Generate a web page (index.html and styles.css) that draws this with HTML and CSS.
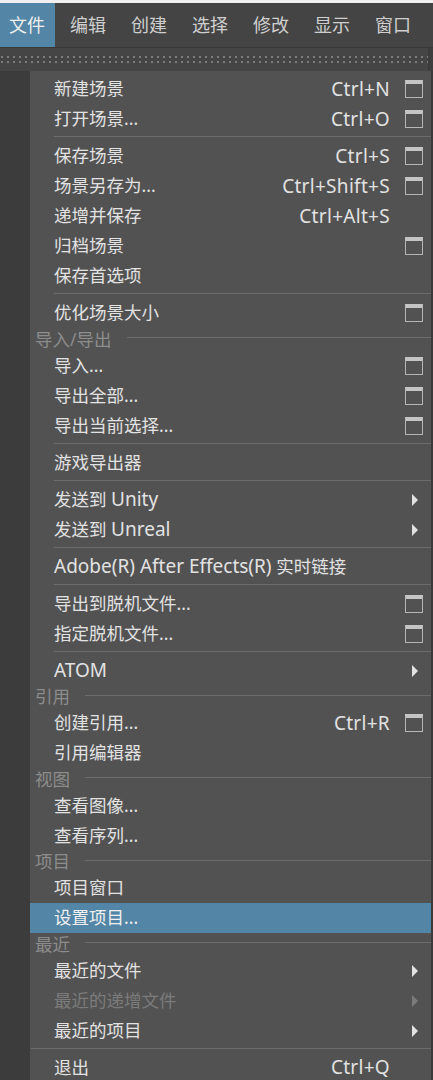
FILE: index.html
```html
<!DOCTYPE html>
<html lang="zh-CN">
<head>
<meta charset="utf-8">
<title>Maya 文件菜单</title>
<link rel="stylesheet" href="styles.css">
</head>
<body>
<div class="app">
  <div class="topstrip"></div>
  <div class="topbar">
    <span class="tab active">文件</span>
    <span class="tab">编辑</span>
    <span class="tab">创建</span>
    <span class="tab">选择</span>
    <span class="tab">修改</span>
    <span class="tab">显示</span>
    <span class="tab">窗口</span>
  </div>
  <div class="toolbar">
    <div class="grip"><div class="dots"></div><div class="dots"></div></div>
    <div class="tool-edge"></div>
  </div>
  <div class="main">
    <div class="side"></div>
    <div class="menu">
      <div class="item"><span class="label">新建场景</span><span class="key">Ctrl+N</span><span class="opt"><i class="box"></i></span></div>
      <div class="item"><span class="label">打开场景...</span><span class="key">Ctrl+O</span><span class="opt"><i class="box"></i></span></div>
      <div class="sep"></div>
      <div class="item"><span class="label">保存场景</span><span class="key">Ctrl+S</span><span class="opt"><i class="box"></i></span></div>
      <div class="item"><span class="label">场景另存为...</span><span class="key">Ctrl+Shift+S</span><span class="opt"><i class="box"></i></span></div>
      <div class="item"><span class="label">递增并保存</span><span class="key">Ctrl+Alt+S</span><span class="opt"></span></div>
      <div class="item"><span class="label">归档场景</span><span class="opt"><i class="box"></i></span></div>
      <div class="item"><span class="label">保存首选项</span><span class="opt"></span></div>
      <div class="sep"></div>
      <div class="item"><span class="label">优化场景大小</span><span class="opt"><i class="box"></i></span></div>
      <div class="header"><span>导入/导出</span><i class="hline"></i></div>
      <div class="item"><span class="label">导入...</span><span class="opt"><i class="box"></i></span></div>
      <div class="item"><span class="label">导出全部...</span><span class="opt"><i class="box"></i></span></div>
      <div class="item"><span class="label">导出当前选择...</span><span class="opt"><i class="box"></i></span></div>
      <div class="sep"></div>
      <div class="item"><span class="label">游戏导出器</span><span class="opt"></span></div>
      <div class="sep"></div>
      <div class="item"><span class="label">发送到 <span class="lat">Unity</span></span><span class="opt"><i class="arrow"></i></span></div>
      <div class="item"><span class="label">发送到 <span class="lat">Unreal</span></span><span class="opt"><i class="arrow"></i></span></div>
      <div class="sep"></div>
      <div class="item"><span class="label"><span class="lat">Adobe(R) After Effects(R)</span> 实时链接</span><span class="opt"></span></div>
      <div class="sep"></div>
      <div class="item"><span class="label">导出到脱机文件...</span><span class="opt"><i class="box"></i></span></div>
      <div class="item"><span class="label">指定脱机文件...</span><span class="opt"><i class="box"></i></span></div>
      <div class="sep"></div>
      <div class="item"><span class="label lat">ATOM</span><span class="opt"><i class="arrow"></i></span></div>
      <div class="header"><span>引用</span><i class="hline"></i></div>
      <div class="item"><span class="label">创建引用...</span><span class="key">Ctrl+R</span><span class="opt"><i class="box"></i></span></div>
      <div class="item"><span class="label">引用编辑器</span><span class="opt"></span></div>
      <div class="header"><span>视图</span><i class="hline"></i></div>
      <div class="item"><span class="label">查看图像...</span><span class="opt"></span></div>
      <div class="item"><span class="label">查看序列...</span><span class="opt"></span></div>
      <div class="header"><span>项目</span><i class="hline"></i></div>
      <div class="item"><span class="label">项目窗口</span><span class="opt"></span></div>
      <div class="item selected"><span class="label">设置项目...</span><span class="opt"></span></div>
      <div class="header"><span>最近</span><i class="hline"></i></div>
      <div class="item"><span class="label">最近的文件</span><span class="opt"><i class="arrow"></i></span></div>
      <div class="item disabled"><span class="label">最近的递增文件</span><span class="opt"><i class="arrow"></i></span></div>
      <div class="item"><span class="label">最近的项目</span><span class="opt"><i class="arrow"></i></span></div>
      <div class="sep full"></div>
      <div class="item"><span class="label">退出</span><span class="key">Ctrl+Q</span><span class="opt"></span></div>
    </div>
    <div class="edge-r"></div>
  </div>
</div>
</body>
</html>
```

FILE: styles.css
```css
html, body {
  margin: 0;
  padding: 0;
  background: #3c3c3c;
}
body {
  width: 433px;
  height: 1080px;
  overflow: hidden;
  font-family: "Noto Sans", "Noto Sans CJK SC", sans-serif;
}
.app {
  display: flex;
  flex-direction: column;
  height: 1080px;
}
.topstrip {
  height: 3px;
  background: #f0f0f0;
}
.topbar {
  height: 44px;
  background: #444444;
  display: flex;
  align-items: stretch;
  gap: 6px;
}
.tab {
  display: flex;
  align-items: center;
  padding: 0 10px 0 9px;
  font-size: 18px;
  color: #cfcfcf;
  line-height: 1;
}
.tab.active {
  background: #5285a6;
  color: #eeeeee;
}
.toolbar {
  height: 23px;
  border-top: 1px solid #383838;
  background: #454545;
  display: flex;
}
.grip {
  flex: 1;
  padding: 8px 0 0 1px;
  display: flex;
  flex-direction: column;
  gap: 3px;
}
.dots {
  height: 2px;
  background: repeating-linear-gradient(to right, #7c7c7c 0 2px, transparent 2px 6px);
}
.tool-edge {
  width: 4px;
  border-left: 1px solid #3a3a3a;
  background: #3e3e3e;
}
.main {
  flex: 1;
  display: flex;
  min-height: 0;
}
.side {
  width: 30px;
  background: #3c3c3c;
}
.edge-r {
  width: 2px;
  background: #3a3a3a;
}
.menu {
  width: 401px;
  background: #525252;
  padding-top: 3px;
  color: #e2e2e2;
  font-size: 17.5px;
}
.item {
  height: 30px;
  display: flex;
  align-items: center;
  padding-left: 24px;
  line-height: 1;
  white-space: nowrap;
}
.item.selected {
  background: #5285a6;
  color: #f0f0f0;
}
.item.disabled {
  color: #7b7b7b;
}
.label {
  flex: 1;
}
.lat,
.key {
  font-size: 19px;
}
.key {
  letter-spacing: 0.3px;
}
.opt {
  width: 18px;
  height: 18px;
  margin: 0 8px 0 15px;
  display: flex;
  align-items: center;
  justify-content: center;
}
.box {
  box-sizing: border-box;
  width: 18px;
  height: 18px;
  border: 1px solid #b6b6b6;
  border-top: 4px solid #c4c4c4;
}
.arrow {
  width: 0;
  height: 0;
  margin-left: 2px;
  border-left: 6px solid #e2e2e2;
  border-top: 6px solid transparent;
  border-bottom: 6px solid transparent;
}
.disabled .arrow {
  border-left-color: #7b7b7b;
}
.sep {
  height: 7px;
  display: flex;
  flex-direction: column;
  padding: 2px 0 0 24px;
  box-sizing: border-box;
}
.sep::before {
  content: "";
  height: 1px;
  background: #6c6c6c;
}
.sep.full {
  padding-left: 1px;
}
.header {
  height: 22.5px;
  display: flex;
  align-items: center;
  padding-left: 5px;
  gap: 15px;
  color: #8c8c8c;
  line-height: 1;
  white-space: nowrap;
}
.hline {
  flex: 1;
  height: 1px;
  margin-top: -3px;
  background: #6c6c6c;
}
```
